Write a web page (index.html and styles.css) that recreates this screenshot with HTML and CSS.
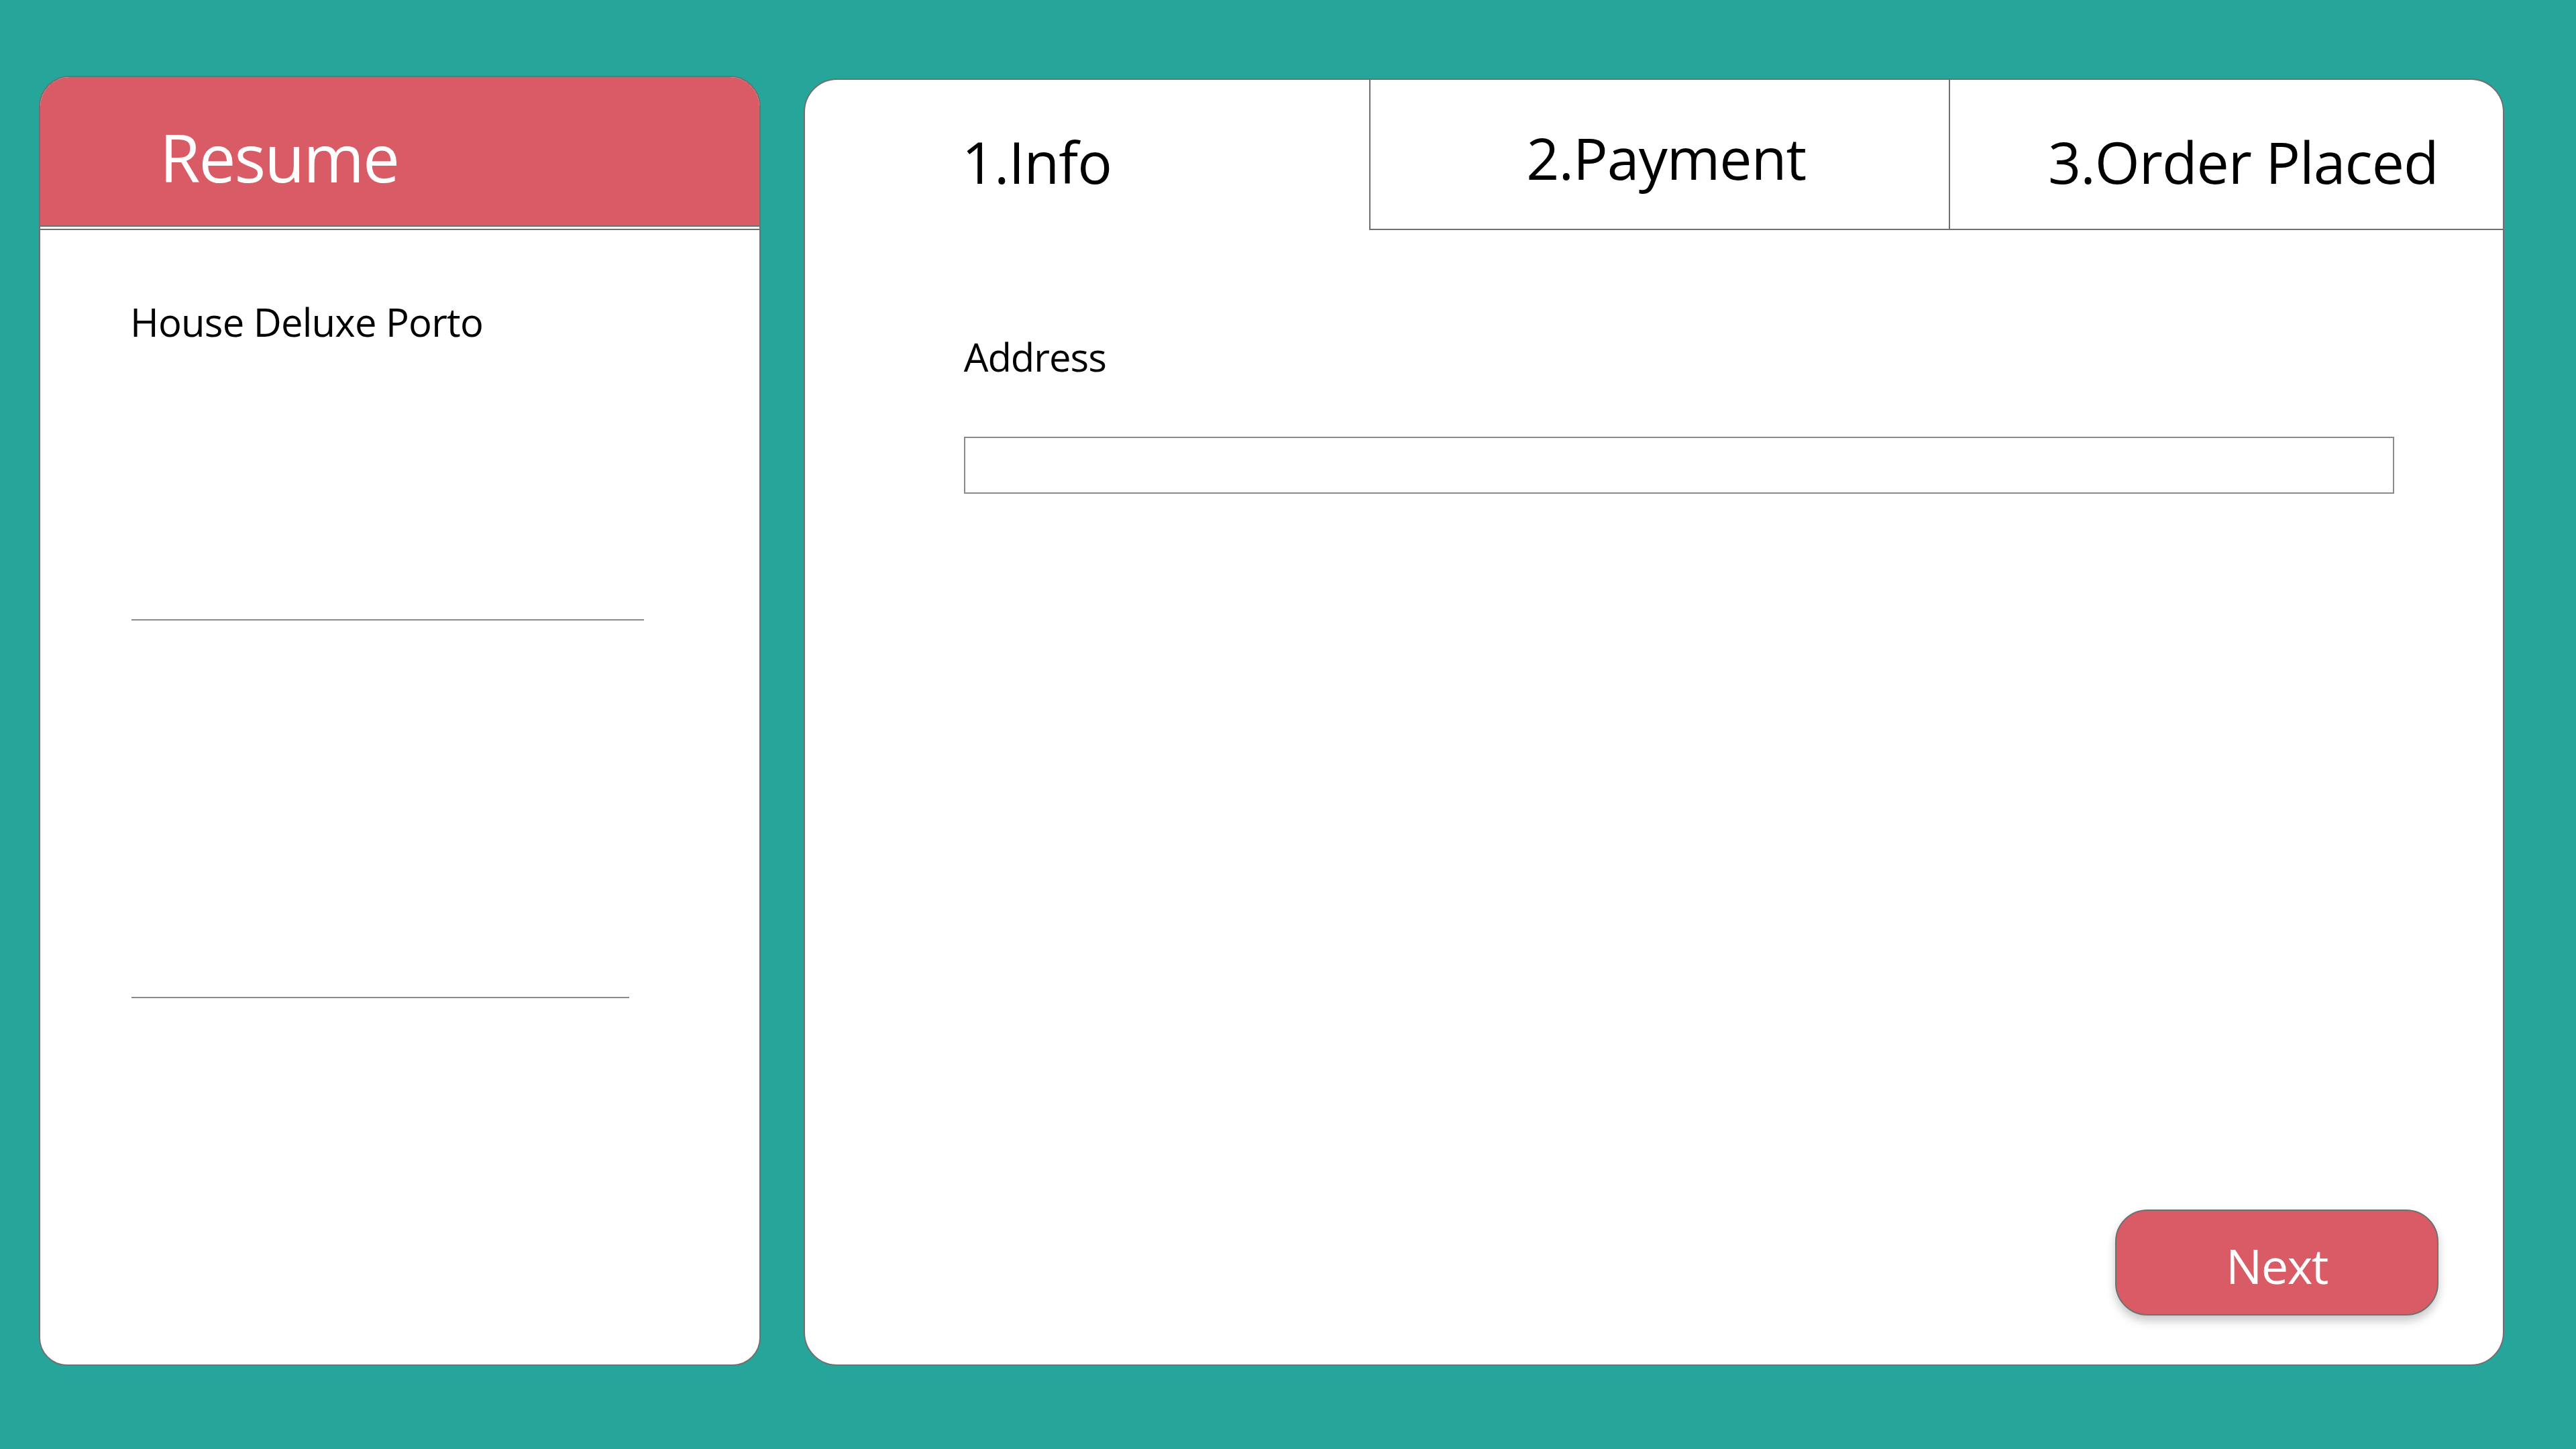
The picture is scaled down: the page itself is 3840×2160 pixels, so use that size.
FILE: index.html
```html
<!DOCTYPE html>
<html lang="en">
<head>
<meta charset="utf-8">
<title>Checkout</title>
<link rel="stylesheet" href="styles.css">
</head>
<body>
<div class="page">
  <aside class="resume">
    <div class="resume-head">Resume</div>
    <div class="resume-rule"></div>
    <div class="resume-body">
      <div class="item-name">House Deluxe Porto</div>
      <div class="line line-a"></div>
      <div class="line line-b"></div>
    </div>
  </aside>
  <main class="checkout">
    <div class="tabs">
      <div class="tab tab-info">1.Info</div>
      <div class="tab tab-pay">2.Payment</div>
      <div class="tab tab-order">3.Order Placed</div>
    </div>
    <div class="form">
      <label class="label" for="addr">Address</label>
      <input id="addr" class="field" type="text">
    </div>
    <div class="actions">
      <button class="next" type="button">Next</button>
    </div>
  </main>
</div>
</body>
</html>
```
FILE: styles.css
```css
* { box-sizing: border-box; }
html, body { margin: 0; padding: 0; }
body {
  width: 3840px;
  height: 2160px;
  background: #26a69a;
  font-family: "Open Sans", "Noto Sans", sans-serif;
  color: #000;
  overflow: hidden;
}
.page {
  display: flex;
  align-items: flex-start;
  gap: 64px;
  padding: 113px 107px 0 58px;
}
.resume {
  width: 1076px;
  height: 1923px;
  background: #fff;
  border: 2px solid #707070;
  border-radius: 46px 46px 42px 42px;
  overflow: hidden;
  display: flex;
  flex-direction: column;
}
.resume-head {
  height: 223px;
  background: #d95b65;
  border-bottom: 2px solid #707070;
  color: #fff;
  font-size: 98px;
  line-height: 1;
  letter-spacing: -2px;
  padding: 70px 0 0 178px;
}
.resume-rule {
  height: 2px;
  margin-top: 3px;
  background: #707070;
}
.resume-body {
  padding: 0 0 0 136px;
}
.item-name {
  margin-top: 108px;
  margin-left: -2px;
  font-size: 58px;
  line-height: 1;
  letter-spacing: -0.8px;
}
.line {
  height: 2px;
  background: #8a8a8a;
}
.line-a {
  width: 764px;
  margin-top: 414px;
}
.line-b {
  width: 742px;
  margin-top: 561px;
}
.checkout {
  width: 2536px;
  height: 1919px;
  margin-top: 4px;
  background: #fff;
  border: 2px solid #707070;
  border-radius: 50px;
  overflow: hidden;
  display: flex;
  flex-direction: column;
}
.tabs {
  display: flex;
  height: 224px;
}
.tab {
  font-size: 86px;
  line-height: 1;
  letter-spacing: -1px;
  padding-top: 79px;
}
.tab-info {
  width: 841px;
  padding-left: 234px;
}
.tab-pay {
  width: 864px;
  border-left: 2px solid #707070;
  border-bottom: 2px solid #707070;
  text-align: center;
  padding-top: 73px;
  padding-left: 20px;
}
.tab-order {
  flex: 1;
  border-left: 2px solid #707070;
  border-bottom: 2px solid #707070;
  text-align: center;
  padding-left: 50px;
}
.form {
  display: flex;
  flex-direction: column;
  align-items: flex-start;
  padding: 160px 0 0 237px;
}
.label {
  font-size: 58px;
  line-height: 1;
  letter-spacing: -1px;
}
.field {
  margin-top: 90px;
  width: 2132px;
  height: 85px;
  border: 2px solid #8a8a8a;
  background: #fff;
  font: inherit;
  outline: none;
}
.actions {
  margin-top: auto;
  display: flex;
  justify-content: flex-end;
  padding: 0 96px 73px 0;
}
.next {
  width: 482px;
  height: 158px;
  background: #d95b65;
  border: 2px solid #707070;
  border-radius: 48px;
  box-shadow: 0 8px 14px rgba(0, 0, 0, 0.22);
  color: #fff;
  font-family: "Open Sans", "Noto Sans", sans-serif;
  font-size: 72px;
  line-height: 1;
  letter-spacing: -1.5px;
  padding: 8px 0 0;
}
```
